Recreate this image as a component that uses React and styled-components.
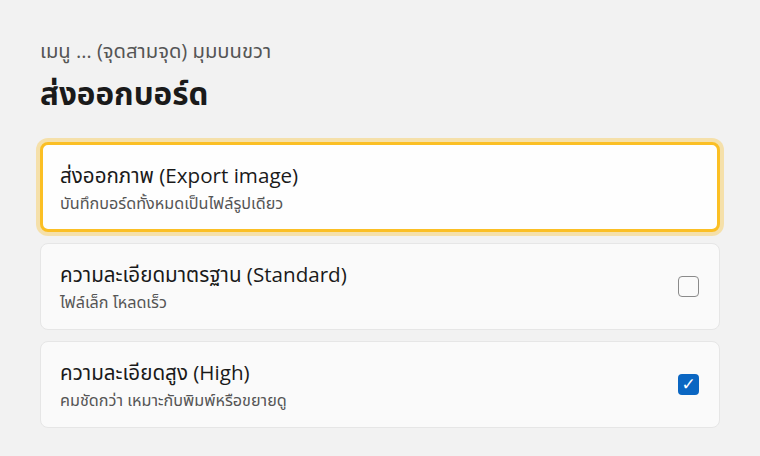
import React from "react";
import styled, { createGlobalStyle } from "styled-components";

const Global = createGlobalStyle`
  html, body { margin: 0; padding: 0; background: #f2f2f2; }
  body { font-family: "Open Sans", "Noto Sans Thai", "Noto Sans", sans-serif; }
`;

const Page = styled.div`
  padding: 36px 40px 0 40px;
  width: 680px;
`;

const Crumb = styled.div`
  font-size: 20.2px;
  line-height: 28px;
  color: #555;
`;

const Title = styled.h1`
  margin: 9px 0 0 0;
  font-size: 31.4px;
  line-height: 40px;
  font-weight: 700;
  color: #1a1a1a;
`;

const List = styled.div`
  margin-top: 29px;
  display: flex;
  flex-direction: column;
  gap: 11px;
`;

const Card = styled.div`
  box-sizing: border-box;
  display: flex;
  align-items: center;
  justify-content: space-between;
  height: ${(p) => (p.$active ? "90px" : "87px")};
  padding: 0 20px 0 ${(p) => (p.$active ? "17px" : "19px")};
  border-radius: 8px;
  background: ${(p) => (p.$active ? "#fefefe" : "#fafafa")};
  border: ${(p) => (p.$active ? "3px solid #fbbf24" : "1px solid #e6e6e6")};
  box-shadow: ${(p) => (p.$active ? "0 0 0 4px rgba(251, 191, 36, 0.35)" : "none")};
`;

const Text = styled.div`
  display: flex;
  flex-direction: column;
  gap: 3px;
`;

const CardTitle = styled.div`
  font-size: 20.6px;
  line-height: 28px;
  color: #1a1a1a;
`;

const CardSub = styled.div`
  font-size: 16.2px;
  line-height: 22px;
  color: #555;
`;

const Box = styled.div`
  box-sizing: border-box;
  width: 21px;
  height: 21px;
  border-radius: 4px;
  border: ${(p) => (p.$checked ? "none" : "1.5px solid #8a8a8a")};
  background: ${(p) => (p.$checked ? "#0a66c2" : "#fafafa")};
  color: #fff;
  display: flex;
  align-items: center;
  justify-content: center;
  font-size: 17px;
  line-height: 1;
  font-family: "DejaVu Sans", sans-serif;
`;

export default function App() {
  return (
    <>
      <Global />
      <Page>
        <Crumb>เมนู … (จุดสามจุด) มุมบนขวา</Crumb>
        <Title>ส่งออกบอร์ด</Title>
        <List>
          <Card $active>
            <Text>
              <CardTitle>ส่งออกภาพ (Export image)</CardTitle>
              <CardSub>บันทึกบอร์ดทั้งหมดเป็นไฟล์รูปเดียว</CardSub>
            </Text>
          </Card>
          <Card>
            <Text>
              <CardTitle>ความละเอียดมาตรฐาน (Standard)</CardTitle>
              <CardSub>ไฟล์เล็ก โหลดเร็ว</CardSub>
            </Text>
            <Box />
          </Card>
          <Card>
            <Text>
              <CardTitle>ความละเอียดสูง (High)</CardTitle>
              <CardSub>คมชัดกว่า เหมาะกับพิมพ์หรือขยายดู</CardSub>
            </Text>
            <Box $checked>✓</Box>
          </Card>
        </List>
      </Page>
    </>
  );
}
